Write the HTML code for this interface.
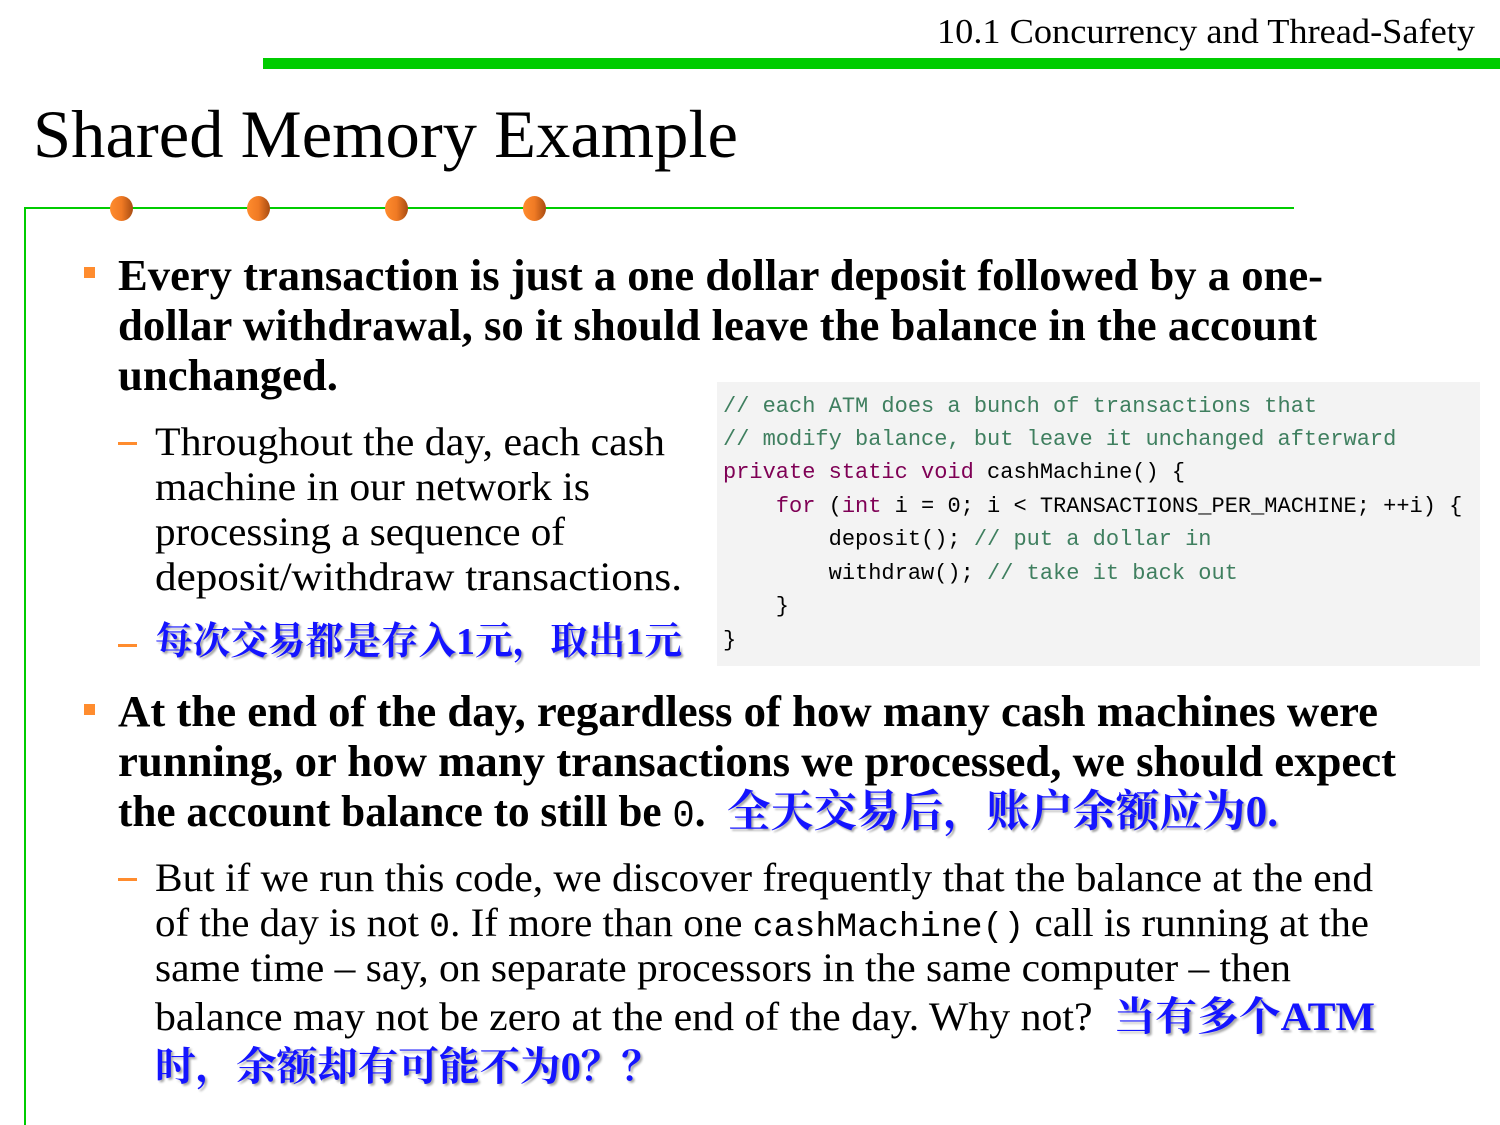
<!DOCTYPE html>
<html><head><meta charset="utf-8">
<style>
html,body{margin:0;padding:0;background:#fff;width:1500px;height:1125px;overflow:hidden;position:relative}
.l{position:absolute;white-space:nowrap;line-height:1;font-family:"Liberation Serif","Noto Serif CJK SC",serif;color:#000;transform-origin:0 0}
.b{font-weight:bold;font-size:44px}
.s{font-size:40px}
.cn{color:#1414ff;font-weight:bold;font-family:"Liberation Serif","Noto Serif CJK SC","Noto Sans CJK SC",serif;text-shadow:2px 2px 2px rgba(0,0,0,.35)}
.m{font-family:"Liberation Mono",monospace}
.sq{position:absolute;width:11px;height:11px;background:#ff8c2e}
.da{position:absolute;width:19px;height:3px;background:#ff8c2e}
.dot{position:absolute;width:23px;height:25px;border-radius:50%;background:linear-gradient(90deg,#ff8c2e 0%,#f07a24 50%,#a84c12 100%)}
.code{position:absolute;left:717px;top:382px;width:763px;height:284px;background:#f3f3f3}
.c{position:absolute;left:723px;white-space:pre;font-family:"Liberation Mono",monospace;font-size:22px;line-height:1;color:#000}
.cm{color:#3f7f5f}.kw{color:#7f0055}
</style></head><body>
<div class="l" style="left:937px;top:14px;font-size:35px;--w:538">10.1 Concurrency and Thread-Safety</div>
<div style="position:absolute;left:263px;top:58px;width:1237px;height:11px;background:#00cc00"></div>
<div class="l" style="left:33px;top:100px;font-size:68px;--w:705">Shared Memory Example</div>
<div style="position:absolute;left:24px;top:207px;width:1270px;height:2px;background:#00cc00"></div>
<div style="position:absolute;left:24px;top:207px;width:2px;height:918px;background:#00cc00"></div>
<div class="dot" style="left:110px;top:196px"></div>
<div class="dot" style="left:247px;top:196px"></div>
<div class="dot" style="left:385px;top:196px"></div>
<div class="dot" style="left:523px;top:196px"></div>

<div class="sq" style="left:84px;top:267px"></div>
<div class="l b" style="left:118px;top:254px;--w:1205">Every transaction is just a one dollar deposit followed by a one-</div>
<div class="l b" style="left:118px;top:304px;--w:1199">dollar withdrawal, so it should leave the balance in the account</div>
<div class="l b" style="left:118px;top:354px;--w:220">unchanged.</div>

<div class="da" style="left:118px;top:442px"></div>
<div class="l s" style="left:155px;top:422px;--w:510">Throughout the day, each cash</div>
<div class="l s" style="left:155px;top:467px;--w:435">machine in our network is</div>
<div class="l s" style="left:155px;top:512px;--w:410">processing a sequence of</div>
<div class="l s" style="left:155px;top:557px;--w:527">deposit/withdraw transactions.</div>
<div class="da" style="left:118px;top:644px"></div>
<div class="l s cn" style="left:155px;top:623px;font-size:38px;--w:527">每次交易都是存入1元，取出1元</div>

<div class="code"></div>
<div class="c" style="top:396px"><span class="cm">// each ATM does a bunch of transactions that</span></div>
<div class="c" style="top:429px"><span class="cm">// modify balance, but leave it unchanged afterward</span></div>
<div class="c" style="top:462px"><span class="kw">private static void</span> cashMachine() {</div>
<div class="c" style="top:496px">    <span class="kw">for</span> (<span class="kw">int</span> i = 0; i &lt; TRANSACTIONS_PER_MACHINE; ++i) {</div>
<div class="c" style="top:529px">        deposit(); <span class="cm">// put a dollar in</span></div>
<div class="c" style="top:563px">        withdraw(); <span class="cm">// take it back out</span></div>
<div class="c" style="top:596px">    }</div>
<div class="c" style="top:630px">}</div>

<div class="sq" style="left:84px;top:704px"></div>
<div class="l b" style="left:118px;top:690px;--w:1260">At the end of the day, regardless of how many cash machines were</div>
<div class="l b" style="left:118px;top:740px;--w:1278">running, or how many transactions we processed, we should expect</div>
<div class="l b" style="left:118px;top:790px;--w:1160">the account balance to still be <span class="m" style="font-weight:normal;font-size:38px">0</span>.&nbsp; <span class="cn">全天交易后，账户余额应为0.</span></div>

<div class="da" style="left:118px;top:878px"></div>
<div class="l s" style="left:155px;top:858px;--w:1218">But if we run this code, we discover frequently that the balance at the end</div>
<div class="l s" style="left:155px;top:903px;--w:1214">of the day is not <span class="m" style="font-size:34px">0</span>. If more than one <span class="m" style="font-size:34px">cashMachine()</span> call is running at the</div>
<div class="l s" style="left:155px;top:948px;--w:1136">same time – say, on separate processors in the same computer – then</div>
<div class="l s" style="left:155px;top:997px;--w:1220">balance may not be zero at the end of the day. Why not?&nbsp; <span class="cn">当有多个ATM</span></div>
<div class="l s cn" style="left:155px;top:1047px;--w:507">时，余额却有可能不为0？？</div>

<script>
function fit(){
document.querySelectorAll('.l').forEach(function(e){
  var w=parseFloat(getComputedStyle(e).getPropertyValue('--w'));
  if(!w)return;
  e.style.transform='none';
  var r=e.getBoundingClientRect().width;
  if(r>0)e.style.transform='scaleX('+(w/r)+')';
});
}
fit();
if(document.fonts&&document.fonts.ready)document.fonts.ready.then(fit);
window.addEventListener('load',fit);
</script>
</body></html>
